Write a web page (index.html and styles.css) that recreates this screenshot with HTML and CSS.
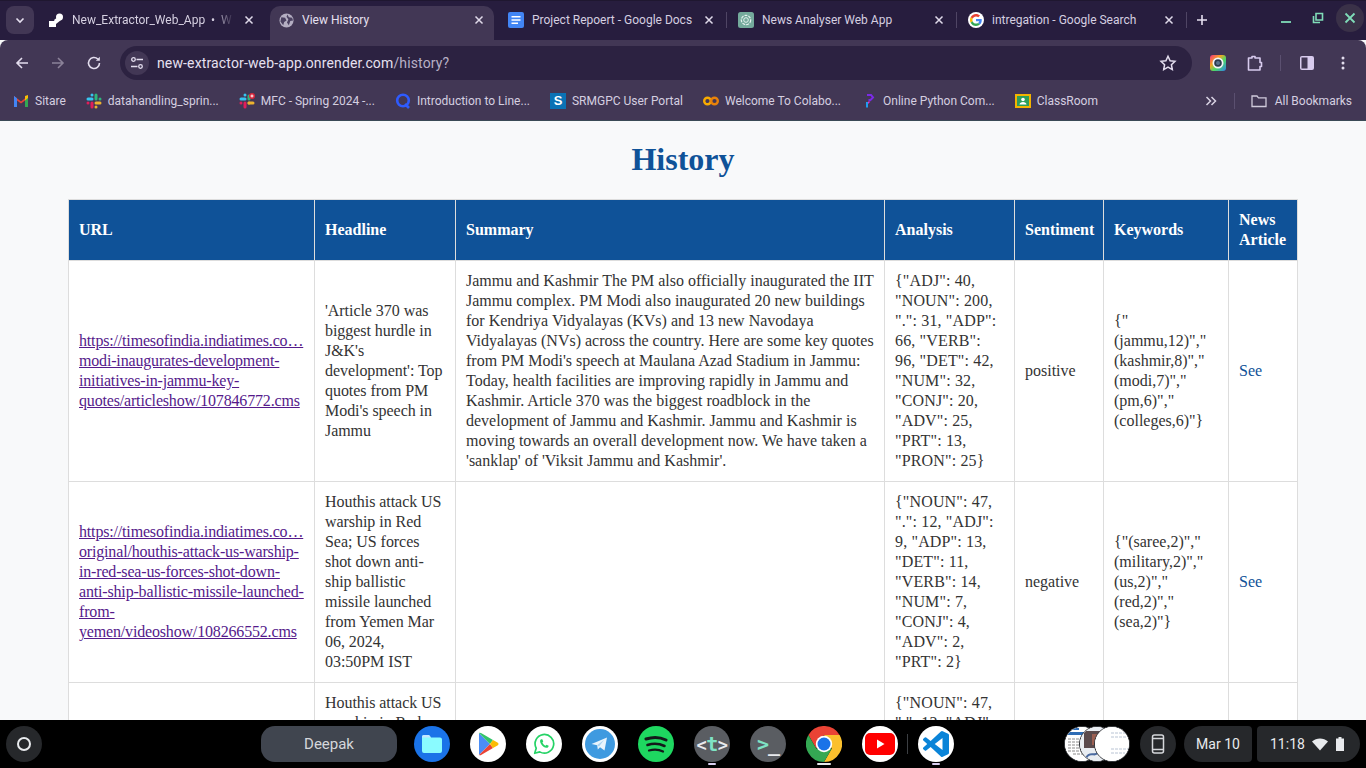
FILE: index.html
```html
<!DOCTYPE html>
<html lang="en">
<head>
  <meta charset="UTF-8">
  <title>View History</title>
  <link rel="stylesheet" href="styles.css">
</head>
<body>
  <!-- Browser tabs -->
  <div class="tabstrip">
    <div class="tab-search">
      <svg width="12" height="12" viewBox="0 0 12 12"><path d="M2.500 4.500 6 8l3.500-3.500" fill="none" stroke="#e6e0f0" stroke-width="1.600"/></svg>
    </div>
    <div class="tab">
      <svg class="fav" viewBox="0 0 16 16"><path d="M1 9h7v6H1z" fill="#fff"/><circle cx="11.500" cy="5" r="3.500" fill="#fff"/><path d="M6 8 10 5l3 3-5 4z" fill="#fff"/></svg>
      <span class="tab-title fade">New_Extractor_Web_App &nbsp;• &nbsp;W</span>
      <svg class="tab-x" viewBox="0 0 10 10"><path d="M1.500 1.500l7 7m0-7l-7 7" stroke="#e0daea" stroke-width="1.500"/></svg>
    </div>
    <div class="tab active">
      <svg class="fav" viewBox="0 0 16 16"><circle cx="8" cy="8" r="7.500" fill="#b4aec2"/><path d="M2.500 4.500 6.500 5l1.500 3-2.500 1.500-1 3.500L1.500 9zM9 1.500l1.500 3 3.500.5 1 3-3 .5-1.500 4.500L8.500 10 10 7 8 4z" fill="#4a4060"/></svg>
      <span class="tab-title">View History</span>
      <svg class="tab-x" viewBox="0 0 10 10"><path d="M1.500 1.500l7 7m0-7l-7 7" stroke="#e0daea" stroke-width="1.500"/></svg>
    </div>
    <div class="tab">
      <svg class="fav" viewBox="0 0 16 16"><rect width="16" height="16" rx="2" fill="#4285f4"/><path d="M3.500 4h9v1.500h-9zM3.500 7.200h9v1.500h-9zM3.500 10.500h6.500V12H3.500z" fill="#fff"/></svg>
      <span class="tab-title">Project Repoert - Google Docs</span>
      <svg class="tab-x" viewBox="0 0 10 10"><path d="M1.500 1.500l7 7m0-7l-7 7" stroke="#e0daea" stroke-width="1.500"/></svg>
      <i class="tab-sep"></i>
    </div>
    <div class="tab">
      <svg class="fav" viewBox="0 0 16 16"><rect width="16" height="16" rx="2.500" fill="#74aa9c"/><circle cx="8" cy="8" r="4.700" fill="none" stroke="#e6f2ef" stroke-width="1.200" stroke-dasharray="3 1"/><circle cx="8" cy="8" r="2.300" fill="none" stroke="#e6f2ef" stroke-width="1"/></svg>
      <span class="tab-title">News Analyser Web App</span>
      <svg class="tab-x" viewBox="0 0 10 10"><path d="M1.500 1.500l7 7m0-7l-7 7" stroke="#e0daea" stroke-width="1.500"/></svg>
      <i class="tab-sep"></i>
    </div>
    <div class="tab">
      <span class="fav-round">
        <svg width="12" height="12" viewBox="0 0 48 48">
          <path fill="#ea4335" d="M24 9.500c3.540 0 6.710 1.220 9.210 3.600l6.850-6.850C35.900 2.380 30.470 0 24 0 14.620 0 6.510 5.380 2.560 13.220l7.980 6.190C12.430 13.720 17.740 9.500 24 9.500z"/>
          <path fill="#4285f4" d="M46.980 24.550c0-1.570-.15-3.090-.38-4.550H24v9.020h12.940c-.58 2.960-2.260 5.480-4.780 7.180l7.730 6c4.510-4.180 7.090-10.360 7.090-17.650z"/>
          <path fill="#fbbc05" d="M10.530 28.590c-.48-1.450-.76-2.990-.76-4.590s.27-3.140.76-4.590l-7.980-6.190C.92 16.460 0 20.120 0 24c0 3.880.92 7.540 2.560 10.780l7.970-6.190z"/>
          <path fill="#34a853" d="M24 48c6.480 0 11.930-2.130 15.890-5.810l-7.730-6c-2.150 1.450-4.920 2.300-8.160 2.300-6.260 0-11.570-4.220-13.470-9.910l-7.980 6.190C6.510 42.620 14.620 48 24 48z"/>
        </svg>
      </span>
      <span class="tab-title">intregation - Google Search</span>
      <svg class="tab-x" viewBox="0 0 10 10"><path d="M1.500 1.500l7 7m0-7l-7 7" stroke="#e0daea" stroke-width="1.500"/></svg>
      <i class="tab-sep"></i>
    </div>
    <svg class="new-tab" width="12" height="12" viewBox="0 0 12 12"><path d="M6 1v10M1 6h10" stroke="#e6e0f0" stroke-width="1.600"/></svg>
    <div class="win-controls">
      <svg class="win-min" width="12" height="12" viewBox="0 0 12 12"><path d="M1 8h10" stroke="#7fdcb8" stroke-width="1.800"/></svg>
      <svg width="12" height="12" viewBox="0 0 12 12"><path d="M4 1.500h6.500V8H4zM1.500 4v6.500H8" fill="none" stroke="#7fdcb8" stroke-width="1.600"/></svg>
      <span class="win-close">
        <svg width="12" height="12" viewBox="0 0 12 12"><path d="M1.500 1.500l9 9m0-9l-9 9" stroke="#7fdcb8" stroke-width="1.800"/></svg>
      </span>
    </div>
  </div>

  <!-- Address bar -->
  <div class="toolbar">
    <button class="tool-btn">
      <svg width="16" height="16" viewBox="0 0 16 16"><path d="M14 8H3M8 3 3 8l5 5" fill="none" stroke="#e3ddee" stroke-width="1.600"/></svg>
    </button>
    <button class="tool-btn">
      <svg width="16" height="16" viewBox="0 0 16 16"><path d="M2 8h11M8 3l5 5-5 5" fill="none" stroke="#8b8299" stroke-width="1.600"/></svg>
    </button>
    <button class="tool-btn">
      <svg width="16" height="16" viewBox="0 0 16 16"><path d="M13.500 8A5.500 5.500 0 1 1 11.800 4" fill="none" stroke="#e3ddee" stroke-width="1.600"/><path d="M13.800 1.800v4h-4z" fill="#e3ddee"/></svg>
    </button>
    <div class="omnibox">
      <span class="site-chip">
        <svg width="14" height="14" viewBox="0 0 14 14"><g fill="none" stroke="#e3ddee" stroke-width="1.300"><circle cx="3.500" cy="3.500" r="1.800"/><path d="M6.500 3.500H13M1 10.500h6.500"/><circle cx="10.500" cy="10.500" r="1.800"/></g></svg>
      </span>
      <span class="url">new-extractor-web-app.onrender.com<span class="url-path">/history?</span></span>
      <svg class="star" width="18" height="18" viewBox="0 0 18 18"><path d="m9 2.200 2.100 4.500 4.900.6-3.600 3.400.9 4.900L9 13.200l-4.300 2.400.9-4.900L2 7.300l4.900-.6z" fill="none" stroke="#e3ddee" stroke-width="1.500"/></svg>
    </div>
    <div class="extensions">
      <svg class="ext-color" width="16" height="16" viewBox="0 0 16 16">
        <defs><linearGradient id="rainbow" x1="0" y1="0" x2="1" y2="1"><stop offset="0" stop-color="#f5317f"/><stop offset=".35" stop-color="#f5a623"/><stop offset=".6" stop-color="#4cd964"/><stop offset="1" stop-color="#2f80ed"/></linearGradient></defs>
        <rect width="16" height="16" rx="3" fill="url(#rainbow)"/><circle cx="8" cy="8" r="5.500" fill="#f4f4f8"/><circle cx="8" cy="8" r="3.800" fill="#2c3a4d"/><circle cx="8" cy="8" r="2" fill="#5b7490"/>
      </svg>
      <svg class="ext-puzzle" width="18" height="18" viewBox="0 0 18 18"><path d="M2.500 6.500V16h11.500v-3.500h1.500v-4H14V4H9V2.500H6V4H2.500z" fill="none" stroke="#d8cbee" stroke-width="1.600" stroke-linejoin="round"/></svg>
      <i class="tool-sep"></i>
      <svg class="ext-panel" width="16" height="16" viewBox="0 0 16 16"><rect x="1" y="1" width="14" height="14" rx="2" fill="#d8cbee"/><rect x="2.500" y="2.500" width="6" height="11" fill="#423755"/></svg>
      <svg class="ext-menu" width="4" height="16" viewBox="0 0 4 16"><circle cx="2" cy="3" r="1.500" fill="#e3ddee"/><circle cx="2" cy="8" r="1.500" fill="#e3ddee"/><circle cx="2" cy="13" r="1.500" fill="#e3ddee"/></svg>
    </div>
  </div>

  <!-- Bookmarks -->
  <div class="bookmarks">
    <div class="bm">
      <svg class="bm-ico" viewBox="0 0 16 16"><path d="M1 14V3l7 5.500L15 3v11h-3V7.500l-4 3-4-3V14z" fill="#ea4335"/><path d="M1 14V3l3 2.300V14z" fill="#4285f4"/><path d="M15 14V3l-3 2.300V14z" fill="#34a853"/><path d="m12 3 3-1v3l-3 2.500z" fill="#fbbc05"/></svg>
      Sitare
    </div>
    <div class="bm">
      <svg class="bm-ico" viewBox="0 0 16 16"><g stroke-width="3" stroke-linecap="round"><path d="M6 2v0" stroke="#36c5f0"/><path d="M2 6h4" stroke="#36c5f0"/><path d="M10 2v4" stroke="#2eb67d"/><path d="M14 6h0" stroke="#2eb67d"/><path d="M10 14v0" stroke="#ecb22e"/><path d="M10 10h4" stroke="#ecb22e"/><path d="M6 10v4" stroke="#e01e5a"/><path d="M2 10h0" stroke="#e01e5a"/></g></svg>
      datahandling_sprin...
    </div>
    <div class="bm">
      <svg class="bm-ico" viewBox="0 0 16 16"><g stroke-width="3" stroke-linecap="round"><path d="M6 2v0" stroke="#36c5f0"/><path d="M2 6h4" stroke="#36c5f0"/><path d="M10 3v3" stroke="#2eb67d"/><path d="M10 10v0" stroke="#ecb22e"/><path d="M10 10h4" stroke="#ecb22e"/><path d="M6 10v4" stroke="#e01e5a"/><path d="M2 10h0" stroke="#e01e5a"/></g><circle cx="13" cy="3" r="3" fill="#d9263c"/><path d="M13 1.500v3M11.500 3h3" stroke="#fff"/></svg>
      MFC - Spring 2024 -...
    </div>
    <div class="bm">
      <svg class="bm-ico" viewBox="0 0 16 16"><circle cx="8" cy="7.500" r="5.800" fill="none" stroke="#2e5bff" stroke-width="2.600"/><path d="m10 11 4 4" stroke="#2e5bff" stroke-width="2.600"/></svg>
      Introduction to Line...
    </div>
    <div class="bm">
      <span class="bm-ico srm">S</span>
      SRMGPC User Portal
    </div>
    <div class="bm">
      <svg class="bm-ico" viewBox="0 0 16 16"><circle cx="4.500" cy="8" r="3.300" fill="none" stroke="#f9ab00" stroke-width="2.400"/><circle cx="11.500" cy="8" r="3.300" fill="none" stroke="#e8810a" stroke-width="2.400"/></svg>
      Welcome To Colabo...
    </div>
    <div class="bm">
      <svg class="bm-ico" viewBox="0 0 16 16"><path d="M6 2h4l2 2.500L9.500 7H7.500" fill="none" stroke="#7c2ae8" stroke-width="2"/><path d="M7 8.500h2.500L7 11z" fill="#e02bd0"/><path d="M6 9v5.500" stroke="#1f9df0" stroke-width="2"/></svg>
      Online Python Com...
    </div>
    <div class="bm">
      <svg class="bm-ico" viewBox="0 0 16 16"><rect width="16" height="14" y="1" fill="#f4b400"/><rect x="2" y="3" width="12" height="10" fill="#2e9e5b"/><circle cx="8" cy="6.500" r="1.800" fill="#fff"/><path d="M4.500 11.500c0-3.500 7-3.500 7 0z" fill="#fff"/></svg>
      ClassRoom
    </div>
    <div class="bm-end">
      <svg class="bm-more" width="12" height="12" viewBox="0 0 12 12"><path d="m1.500 2 4 4-4 4M6.500 2l4 4-4 4" fill="none" stroke="#d9d3e4" stroke-width="1.500"/></svg>
      <i class="bm-sep"></i>
      <div class="bm all-bm">
        <svg class="bm-ico" viewBox="0 0 16 16"><path d="M1 3h5l1.500 1.800H15V13.500H1z" fill="none" stroke="#d0cadb" stroke-width="1.300"/></svg>
        All Bookmarks
      </div>
    </div>
  </div>

  <!-- Page -->
  <main class="page">
    <h1 class="page-title">History</h1>
    <table class="history">
      <thead>
        <tr>
          <th class="col-url">URL</th>
          <th class="col-head">Headline</th>
          <th class="col-sum">Summary</th>
          <th class="col-ana">Analysis</th>
          <th class="col-sent">Sentiment</th>
          <th class="col-key">Keywords</th>
          <th class="col-news">News Article</th>
        </tr>
      </thead>
      <tbody>
        <tr>
          <td><a class="visited" href="#">https://timesofindia.indiatimes.co…<br>modi-inaugurates-development-<br>initiatives-in-jammu-key-<br>quotes/articleshow/107846772.cms</a></td>
          <td class="cell-head">'Article 370 was biggest hurdle in J&amp;K's development': Top quotes from PM Modi's speech in Jammu</td>
          <td>Jammu and Kashmir The PM also officially inaugurated the IIT Jammu complex. PM Modi also inaugurated 20 new buildings for Kendriya Vidyalayas (KVs) and 13 new Navodaya Vidyalayas (NVs) across the country. Here are some key quotes from PM Modi's speech at Maulana Azad Stadium in Jammu: Today, health facilities are improving rapidly in Jammu and Kashmir. Article 370 was the biggest roadblock in the development of Jammu and Kashmir. Jammu and Kashmir is moving towards an overall development now. We have taken a 'sanklap' of 'Viksit Jammu and Kashmir'.</td>
          <td class="cell-ana">{"ADJ": 40, "NOUN": 200, ".": 31, "ADP": 66, "VERB": 96, "DET": 42, "NUM": 32, "CONJ": 20, "ADV": 25, "PRT": 13, "PRON": 25}</td>
          <td>positive</td>
          <td>{"<br>(jammu,12)","<br>(kashmir,8)","<br>(modi,7)","<br>(pm,6)","<br>(colleges,6)"}</td>
          <td><a class="see" href="#">See</a></td>
        </tr>
        <tr>
          <td><a class="visited" href="#">https://timesofindia.indiatimes.co…<br>original/houthis-attack-us-warship-<br>in-red-sea-us-forces-shot-down-<br>anti-ship-ballistic-missile-launched-<br>from-<br>yemen/videoshow/108266552.cms</a></td>
          <td class="cell-head">Houthis attack US warship in Red Sea; US forces shot down anti-ship ballistic missile launched from Yemen Mar 06, 2024, 03:50PM IST</td>
          <td></td>
          <td class="cell-ana">{"NOUN": 47, ".": 12, "ADJ": 9, "ADP": 13, "DET": 11, "VERB": 14, "NUM": 7, "CONJ": 4, "ADV": 2, "PRT": 2}</td>
          <td>negative</td>
          <td>{"(saree,2)","<br>(military,2)","<br>(us,2)","<br>(red,2)","<br>(sea,2)"}</td>
          <td><a class="see" href="#">See</a></td>
        </tr>
        <tr>
          <td><a class="visited" href="#">https://timesofindia.indiatimes.co…<br>original/houthis-attack-us-warship-<br>in-red-sea-us-forces-shot-down-<br>anti-ship-ballistic-missile-launched-<br>from-<br>yemen/videoshow/108266552.cms</a></td>
          <td class="cell-head">Houthis attack US warship in Red Sea; US forces shot down anti-ship ballistic missile launched from Yemen Mar 06, 2024, 03:50PM IST</td>
          <td></td>
          <td class="cell-ana">{"NOUN": 47, ".": 12, "ADJ": 9, "ADP": 13, "DET": 11, "VERB": 14, "NUM": 7, "CONJ": 4, "ADV": 2, "PRT": 2}</td>
          <td>negative</td>
          <td>{"(saree,2)","<br>(military,2)","<br>(us,2)","<br>(red,2)","<br>(sea,2)"}</td>
          <td><a class="see" href="#">See</a></td>
        </tr>
      </tbody>
    </table>
  </main>

  <!-- ChromeOS shelf -->
  <footer class="shelf">
    <span class="launcher"><i class="launcher-ring"></i></span>
    <span class="user-pill">Deepak</span>
    <div class="apps">
      <span class="app app-files">
        <svg width="22" height="20" viewBox="0 0 22 20"><path d="M1 3a2 2 0 0 1 2-2h5l2 2.500h9a2 2 0 0 1 2 2V17a2 2 0 0 1-2 2H3a2 2 0 0 1-2-2z" fill="#8afbff"/><path d="M1 3a2 2 0 0 1 2-2h5l2 2.500h-9z" fill="#c4e6ff"/></svg>
      </span>
      <span class="app app-white">
        <svg width="22" height="24" viewBox="0 0 22 24"><path d="M2 1v22l11-11z" fill="#4a8df6"/><path d="M2 1c.8-.5 1.500-.4 2.500.2L16 8l-3 4z" fill="#34c46a"/><path d="M2 23c.8.5 1.500.4 2.500-.2L16 16l-3-4z" fill="#ea4335"/><path d="m16 8 4.500 2.600c1.400.8 1.400 2 0 2.800L16 16l-3-4z" fill="#fbbc05"/></svg>
      </span>
      <span class="app app-white">
        <svg width="22" height="22" viewBox="0 0 26 26"><path d="M2 24l1.800-6A11 11 0 1 1 8 22.300z" fill="none" stroke="#25d366" stroke-width="2" stroke-linejoin="round"/><path d="M9.500 7.500c-1.500 1-1.500 3 0 5.500s4 4.500 6.500 4.500c1.500 0 2.500-1 2.500-2.500l-2.500-1.200-1.200 1.200c-1.500-.5-3-2-3.700-3.700l1-1.200L11 7.500z" fill="#25d366"/></svg>
      </span>
      <span class="app app-white">
        <svg width="30" height="30" viewBox="0 0 30 30"><circle cx="15" cy="15" r="15" fill="#3f9ae0"/><path d="M6.500 15 22 8.500l-2.500 13-4.500-3.200-2.200 2.200-.6-4.200z" fill="#e9f4fc"/><path d="m12 16.300 7-5.300-5 6.500z" fill="#a9d3f1"/></svg>
      </span>
      <span class="app app-spotify">
        <svg width="24" height="20" viewBox="0 0 24 20"><g fill="none" stroke="#14191a" stroke-linecap="round"><path d="M2 5c6-2 14-2 20 1" stroke-width="3"/><path d="M3.500 11c5-1.600 12-1.400 17 1" stroke-width="2.600"/><path d="M5 16.500c4-1 10-1 14 1" stroke-width="2.200"/></g></svg>
      </span>
      <span class="app app-grey running"><span class="code-t"><i>&lt;</i><b>t</b><i>&gt;</i></span></span>
      <span class="app app-grey"><span class="code-term"><b>&gt;</b><i>_</i></span></span>
      <span class="app running wide">
        <svg width="36" height="36" viewBox="0 0 36 36">
          <path d="M33.600 9A18 18 0 0 0 2.400 9l7.800 13.500L18 9z" fill="#ea4335"/>
          <path d="M33.600 9A18 18 0 0 1 18 36l7.800-13.500L18 9z" fill="#fbc02d"/>
          <path d="M18 36A18 18 0 0 1 2.400 9l7.800 13.500h15.600z" fill="#34a853"/>
          <circle cx="18" cy="18" r="8.200" fill="#fff"/><circle cx="18" cy="18" r="6.500" fill="#1a73e8"/>
        </svg>
      </span>
      <span class="app app-white">
        <svg width="30" height="22" viewBox="0 0 30 22"><rect width="30" height="22" rx="5" fill="#f00"/><path d="M12 6.500v9l7.500-4.500z" fill="#fff"/></svg>
      </span>
      <i class="apps-sep"></i>
      <span class="app app-white running">
        <svg width="26" height="26" viewBox="0 0 24 24"><path d="M23.150 2.587 18.210.21a1.494 1.494 0 0 0-1.705.29l-9.460 8.630-4.120-3.128a.999.999 0 0 0-1.276.057L.327 7.261A1 1 0 0 0 .326 8.740L3.899 12 .326 15.260a1 1 0 0 0 .001 1.479L1.650 17.940a.999.999 0 0 0 1.276.057l4.120-3.128 9.460 8.630a1.492 1.492 0 0 0 1.704.29l4.942-2.377A1.500 1.500 0 0 0 24 20.060V3.939a1.500 1.500 0 0 0-.85-1.352zm-5.146 14.861L10.826 12l7.178-5.448v10.896z" fill="#0a84d8"/></svg>
      </span>
    </div>
    <div class="tray">
      <div class="thumbs">
        <span class="thumb">
          <svg width="38" height="34" viewBox="0 0 38 34"><rect width="38" height="34" fill="#fff"/><rect y="5" width="38" height="3" fill="#2f6db5"/><rect x="8" y="1" width="6" height="2" fill="#2f6db5"/><path d="M3 12h30M3 15h28M3 18h30M3 21h26M3 24h30M8 27h20" stroke="#8a8a8a" stroke-dasharray="3 1"/></svg>
        </span>
        <span class="thumb thumb-mid">
          <svg width="38" height="34" viewBox="0 0 38 34"><rect width="38" height="34" fill="#e9edf2"/><rect x="4" y="4" width="30" height="17" fill="#5a4a4c"/><rect x="12" y="7" width="12" height="11" fill="#9b5f52"/><path d="M6 31c4-8 10 0 12-6 4 4 10-2 14 5" fill="none" stroke="#4a6aa0" stroke-width="2"/></svg>
        </span>
        <span class="thumb thumb-last">
          <svg width="38" height="34" viewBox="0 0 38 34"><rect width="38" height="34" fill="#fff"/><path d="M16 6h18M16 10h16M16 22h18M16 26h14" stroke="#b9c4d4" stroke-dasharray="3 1"/></svg>
        </span>
      </div>
      <span class="phone">
        <svg width="14" height="20" viewBox="0 0 14 20"><rect x="1.500" y="1" width="11" height="18" rx="2" fill="none" stroke="#d5d7db" stroke-width="1.500"/><path d="M1.500 4.500h11M1.500 15.500h11" stroke="#d5d7db" stroke-width="1.500"/></svg>
      </span>
      <span class="date-pill">Mar 10</span>
      <span class="time-pill">
        11:18
        <svg width="16" height="14" viewBox="0 0 16 14"><path d="M0 4.500C4.500.5 11.500.5 16 4.500L8 13.500z" fill="#e8eaed"/></svg>
        <svg width="10" height="14" viewBox="0 0 10 14"><path d="M3.500 0h3v1.500H9V14H1V1.500h2.500z" fill="#e8eaed"/></svg>
      </span>
    </div>
  </footer>
</body>
</html>
```

FILE: styles.css
```css
html, body {
  margin: 0;
  padding: 0;
  height: 100%;
  overflow: hidden;
}
body {
  display: flex;
  flex-direction: column;
  background: #f8f9fa;
  font-family: Roboto, "Liberation Sans", sans-serif;
}
svg {
  display: block;
  flex: none;
}

/* Tab strip */
.tabstrip {
  display: flex;
  align-items: flex-start;
  height: 40px;
  padding: 5px 2px 0 6px;
  box-sizing: border-box;
  background: #271d3e;
  border-top: 1px solid #1f1730;
  flex: none;
}
.tab-search {
  display: flex;
  align-items: center;
  justify-content: center;
  width: 28px;
  height: 28px;
  margin-right: 6px;
  border-radius: 8px;
  background: #423755;
}
.tab {
  position: relative;
  display: flex;
  align-items: center;
  width: 230px;
  height: 34px;
  padding: 0 16px 6px 8px;
  box-sizing: border-box;
  color: #d5cfe0;
  font-size: 12px;
}
.tab.active {
  width: 224px;
  margin-right: 6px;
  padding-left: 9px;
  padding-right: 10px;
  background: #423755;
  border-radius: 10px 10px 0 0;
  color: #e6e0f0;
}
.fav {
  width: 16px;
  height: 16px;
  flex: none;
}
.tab.active .fav {
  width: 15px;
  height: 15px;
}
.fav-round {
  display: flex;
  align-items: center;
  justify-content: center;
  width: 16px;
  height: 16px;
  border-radius: 50%;
  background: #fff;
  flex: none;
}
.tab-title {
  flex: 1;
  min-width: 0;
  margin-left: 8px;
  white-space: nowrap;
  overflow: hidden;
}
.tab-title.fade {
  margin-right: 10px;
  -webkit-mask-image: linear-gradient(to right, #000 88%, transparent);
  mask-image: linear-gradient(to right, #000 88%, transparent);
}
.tab-x {
  width: 10px;
  height: 10px;
  flex: none;
}
.tab-sep {
  position: absolute;
  right: 3px;
  top: 6px;
  width: 1px;
  height: 16px;
  background: #4f4564;
}
.new-tab {
  margin: 8px 0 0 6px;
}
.win-controls {
  display: flex;
  align-items: center;
  gap: 12px;
  margin-left: auto;
  margin-top: -2px;
}
.win-min {
  margin-top: 4px;
  margin-right: 8px;
}
.win-close {
  display: flex;
  align-items: center;
  justify-content: center;
  width: 28px;
  height: 28px;
  border-radius: 50%;
  background: #3a3148;
}

/* Address bar */
.toolbar {
  display: flex;
  align-items: center;
  height: 41px;
  padding: 5px 0 0 4px;
  box-sizing: border-box;
  background: #423755;
  border-radius: 8px 8px 0 0;
  flex: none;
}
.tool-btn {
  display: flex;
  align-items: center;
  justify-content: center;
  width: 36px;
  height: 36px;
  padding: 0;
  border: 0;
  background: none;
}
.omnibox {
  display: flex;
  align-items: center;
  width: 1072px;
  height: 34px;
  margin-left: 8px;
  border-radius: 17px;
  background: #2c2241;
}
.site-chip {
  display: flex;
  align-items: center;
  justify-content: center;
  width: 24px;
  height: 24px;
  margin-left: 5px;
  border-radius: 50%;
  background: #423755;
}
.url {
  margin-left: 8px;
  color: #e6e0f0;
  font-size: 14px;
  letter-spacing: .14px;
}
.url-path {
  color: #b8b0c6;
}
.star {
  margin-left: auto;
  margin-right: 15px;
}
.extensions {
  display: flex;
  align-items: center;
  flex: 1;
}
.ext-color {
  margin-left: 18px;
}
.ext-puzzle {
  margin-left: 20px;
}
.tool-sep {
  width: 1px;
  height: 16px;
  margin-left: 16px;
  background: #5b5070;
}
.ext-panel {
  margin-left: 18px;
}
.ext-menu {
  margin-left: 26px;
}

/* Bookmarks */
.bookmarks {
  display: flex;
  align-items: center;
  gap: 20px;
  height: 40px;
  padding: 0 14px 0 13px;
  box-sizing: border-box;
  background: #423755;
  border-bottom: 1px solid #3a4a55;
  color: #d5cfe0;
  font-size: 12px;
  flex: none;
}
.bm {
  display: flex;
  align-items: center;
  gap: 6px;
  white-space: nowrap;
}
.bm-ico {
  width: 16px;
  height: 16px;
  flex: none;
}
.srm {
  background: #0b72b5;
  color: #fff;
  font: bold 13px/16px "Liberation Sans", sans-serif;
  text-align: center;
}
.bm-end {
  display: flex;
  align-items: center;
  margin-left: auto;
}
.bm-sep {
  width: 1px;
  height: 16px;
  margin: 0 16px 0 17px;
  background: #5b5070;
}
.all-bm {
  gap: 8px;
}

/* Page content */
.page {
  flex: 1;
  min-height: 0;
  overflow: hidden;
  padding: 0 68px;
}
.page-title {
  margin: 20px 0 21px;
  color: #0f5298;
  font-family: "Liberation Serif", serif;
  font-size: 32px;
  font-weight: bold;
  line-height: 37px;
  text-align: center;
}
.history {
  width: 1230px;
  table-layout: fixed;
  border-collapse: collapse;
  background: #fff;
  color: #333;
  font-family: "Liberation Serif", serif;
  font-size: 16px;
  line-height: 20px;
}
.history th,
.history td {
  padding: 10px;
  border: 1px solid #ddd;
  text-align: left;
  vertical-align: middle;
  overflow-wrap: break-word;
}
.history th {
  background: #0f5298;
  color: #fff;
  font-weight: bold;
}
.col-url { width: 225px; }
.col-head { width: 120px; }
.col-sum { width: 408px; }
.col-ana { width: 109px; }
.col-sent { width: 68px; white-space: nowrap; }
.col-key { width: 104px; }
.col-news { width: 48px; }
.cell-head {
  letter-spacing: -.05px;
}
.cell-ana {
  letter-spacing: .15px;
}
.visited {
  color: #551a8b;
  white-space: nowrap;
  letter-spacing: -.17px;
}
.see {
  color: #0f5298;
  text-decoration: none;
}

/* Shelf */
.shelf {
  display: flex;
  align-items: center;
  height: 48px;
  padding: 0 6px;
  box-sizing: border-box;
  background: #000;
  flex: none;
}
.launcher {
  display: flex;
  align-items: center;
  justify-content: center;
  width: 36px;
  height: 36px;
  border-radius: 50%;
  background: #26282b;
}
.launcher-ring {
  width: 10px;
  height: 10px;
  border: 2px solid #e8eaed;
  border-radius: 50%;
}
.user-pill {
  width: 136px;
  height: 36px;
  margin-left: 219px;
  border-radius: 14px;
  background: #40454f;
  color: #d5d7db;
  font-size: 15px;
  line-height: 36px;
  text-align: center;
}
.apps {
  display: flex;
  align-items: center;
  gap: 20px;
  margin-left: 17px;
}
.app {
  position: relative;
  display: flex;
  align-items: center;
  justify-content: center;
  width: 36px;
  height: 36px;
  border-radius: 50%;
}
.app-files {
  background: #1a73e8;
}
.app-white {
  background: #fff;
}
.app-spotify {
  background: #1ed760;
}
.app-grey {
  background: #5a5d62;
  font-family: "DejaVu Sans Mono", monospace;
}
.running::after {
  content: "";
  position: absolute;
  left: 14px;
  bottom: -3px;
  width: 8px;
  height: 2px;
  border-radius: 1px;
  background: #d9cff0;
}
.wide::after {
  left: 11px;
  width: 14px;
  background: #e8eaed;
}
.code-t {
  font-size: 17px;
  line-height: 36px;
  letter-spacing: -.5px;
  color: #e8eaed;
  white-space: nowrap;
}
.code-t i {
  font-style: normal;
  font-weight: bold;
}
.code-t b {
  color: #7fe3c4;
  font-size: 20px;
}
.code-term {
  font-size: 20px;
  line-height: 36px;
  letter-spacing: -1px;
}
.code-term b {
  color: #7fe3c4;
}
.code-term i {
  color: #e8eaed;
  font-style: normal;
  font-weight: bold;
}
.apps-sep {
  width: 1px;
  height: 20px;
  margin: 0 -10px 0 -11px;
  background: #3c3f43;
}
.tray {
  display: flex;
  align-items: center;
  margin-left: auto;
}
.thumbs {
  display: flex;
  margin-right: 10px;
}
.thumb {
  width: 34px;
  height: 34px;
  border: 1px solid #2e3034;
  border-radius: 50%;
  overflow: hidden;
  background: #fff;
}
.thumb-mid,
.thumb-last {
  margin-left: -21px;
}
.phone {
  display: flex;
  align-items: center;
  justify-content: center;
  width: 36px;
  height: 36px;
  border-radius: 50%;
  background: #26282b;
}
.date-pill {
  width: 68px;
  height: 36px;
  margin-left: 8px;
  border-radius: 18px 4px 4px 18px;
  background: #26282b;
  color: #e8eaed;
  font-size: 14px;
  line-height: 36px;
  text-align: center;
}
.time-pill {
  display: flex;
  align-items: center;
  gap: 7px;
  width: 103px;
  height: 36px;
  margin-left: 5px;
  padding: 0 0 0 13px;
  box-sizing: border-box;
  border-radius: 4px 18px 18px 4px;
  background: #26282b;
  color: #e8eaed;
  font-size: 14px;
}
```
